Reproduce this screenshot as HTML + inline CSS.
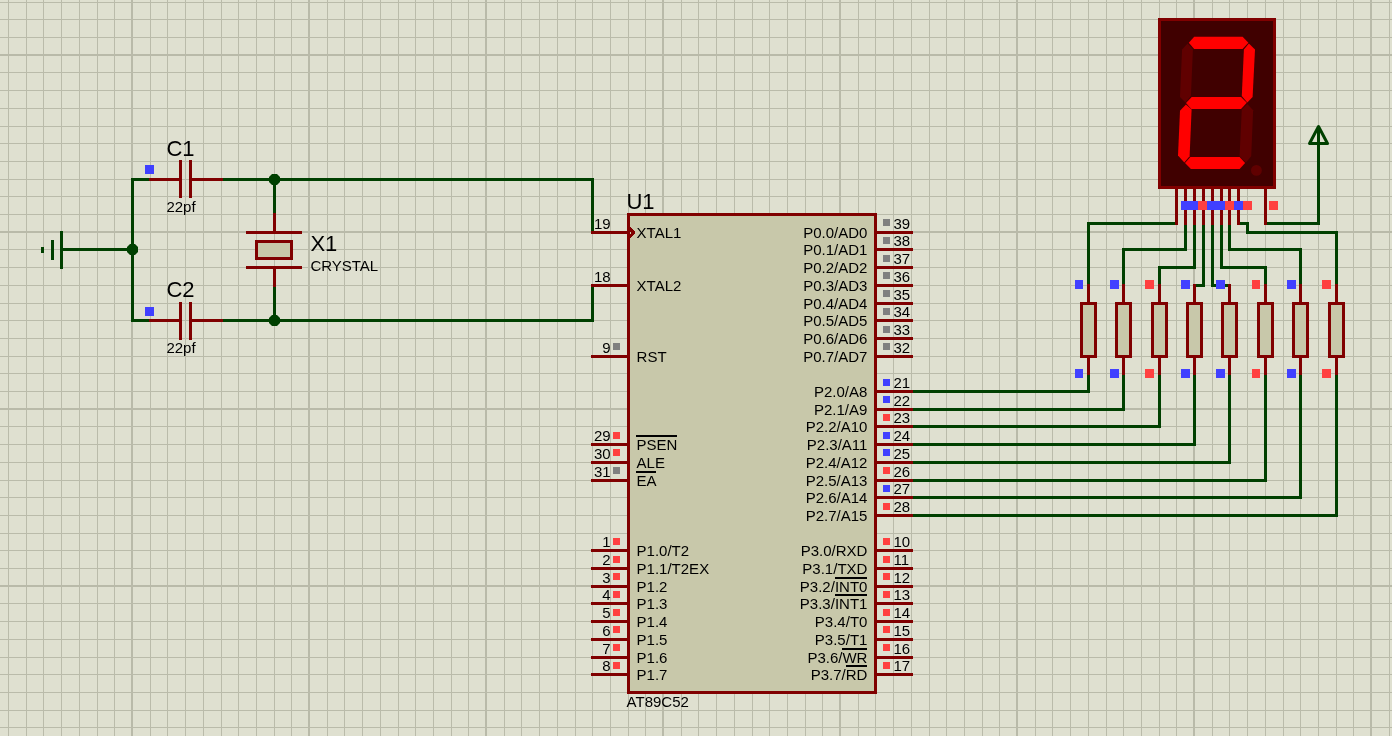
<!DOCTYPE html>
<html lang="en"><head><meta charset="utf-8"><title>AT89C52 seven segment schematic</title>
<style>html,body{margin:0;padding:0;background:#dfe0d0;overflow:hidden}svg{display:block}svg{will-change:transform}text{white-space:pre}</style></head>
<body>
<svg width="1392" height="736" viewBox="0 0 1392 736" font-family="'Liberation Sans', sans-serif" fill="#000000">
<rect x="0" y="0" width="1392" height="736" fill="#dfe0d0"/>
<g fill="#babbaa" shape-rendering="crispEdges"><rect x="8" y="0" width="1" height="736"/><rect x="26" y="0" width="1" height="736"/><rect x="43" y="0" width="1" height="736"/><rect x="61" y="0" width="1" height="736"/><rect x="79" y="0" width="1" height="736"/><rect x="97" y="0" width="1" height="736"/><rect x="114" y="0" width="1" height="736"/><rect x="131" y="0" width="2" height="736" fill="#b9baa9"/><rect x="150" y="0" width="1" height="736"/><rect x="167" y="0" width="1" height="736"/><rect x="185" y="0" width="1" height="736"/><rect x="203" y="0" width="1" height="736"/><rect x="221" y="0" width="1" height="736"/><rect x="238" y="0" width="1" height="736"/><rect x="256" y="0" width="1" height="736"/><rect x="274" y="0" width="1" height="736"/><rect x="291" y="0" width="1" height="736"/><rect x="308" y="0" width="2" height="736" fill="#b9baa9"/><rect x="327" y="0" width="1" height="736"/><rect x="344" y="0" width="1" height="736"/><rect x="362" y="0" width="1" height="736"/><rect x="380" y="0" width="1" height="736"/><rect x="398" y="0" width="1" height="736"/><rect x="415" y="0" width="1" height="736"/><rect x="433" y="0" width="1" height="736"/><rect x="451" y="0" width="1" height="736"/><rect x="468" y="0" width="1" height="736"/><rect x="485" y="0" width="2" height="736" fill="#b9baa9"/><rect x="504" y="0" width="1" height="736"/><rect x="521" y="0" width="1" height="736"/><rect x="539" y="0" width="1" height="736"/><rect x="557" y="0" width="1" height="736"/><rect x="575" y="0" width="1" height="736"/><rect x="592" y="0" width="1" height="736"/><rect x="610" y="0" width="1" height="736"/><rect x="628" y="0" width="1" height="736"/><rect x="645" y="0" width="1" height="736"/><rect x="662" y="0" width="2" height="736" fill="#b9baa9"/><rect x="681" y="0" width="1" height="736"/><rect x="698" y="0" width="1" height="736"/><rect x="716" y="0" width="1" height="736"/><rect x="734" y="0" width="1" height="736"/><rect x="752" y="0" width="1" height="736"/><rect x="769" y="0" width="1" height="736"/><rect x="787" y="0" width="1" height="736"/><rect x="805" y="0" width="1" height="736"/><rect x="822" y="0" width="1" height="736"/><rect x="839" y="0" width="2" height="736" fill="#b9baa9"/><rect x="858" y="0" width="1" height="736"/><rect x="875" y="0" width="1" height="736"/><rect x="893" y="0" width="1" height="736"/><rect x="911" y="0" width="1" height="736"/><rect x="929" y="0" width="1" height="736"/><rect x="946" y="0" width="1" height="736"/><rect x="964" y="0" width="1" height="736"/><rect x="982" y="0" width="1" height="736"/><rect x="999" y="0" width="1" height="736"/><rect x="1016" y="0" width="2" height="736" fill="#b9baa9"/><rect x="1035" y="0" width="1" height="736"/><rect x="1052" y="0" width="1" height="736"/><rect x="1070" y="0" width="1" height="736"/><rect x="1088" y="0" width="1" height="736"/><rect x="1106" y="0" width="1" height="736"/><rect x="1123" y="0" width="1" height="736"/><rect x="1141" y="0" width="1" height="736"/><rect x="1159" y="0" width="1" height="736"/><rect x="1176" y="0" width="1" height="736"/><rect x="1193" y="0" width="2" height="736" fill="#b9baa9"/><rect x="1212" y="0" width="1" height="736"/><rect x="1229" y="0" width="1" height="736"/><rect x="1247" y="0" width="1" height="736"/><rect x="1265" y="0" width="1" height="736"/><rect x="1283" y="0" width="1" height="736"/><rect x="1300" y="0" width="1" height="736"/><rect x="1318" y="0" width="1" height="736"/><rect x="1336" y="0" width="1" height="736"/><rect x="1353" y="0" width="1" height="736"/><rect x="1370" y="0" width="2" height="736" fill="#b9baa9"/><rect x="1389" y="0" width="1" height="736"/><rect x="0" y="2" width="1392" height="1"/><rect x="0" y="19" width="1392" height="1"/><rect x="0" y="37" width="1392" height="1"/><rect x="0" y="54" width="1392" height="2" fill="#b9baa9"/><rect x="0" y="72" width="1392" height="1"/><rect x="0" y="90" width="1392" height="1"/><rect x="0" y="108" width="1392" height="1"/><rect x="0" y="126" width="1392" height="1"/><rect x="0" y="143" width="1392" height="1"/><rect x="0" y="161" width="1392" height="1"/><rect x="0" y="179" width="1392" height="1"/><rect x="0" y="196" width="1392" height="1"/><rect x="0" y="214" width="1392" height="1"/><rect x="0" y="231" width="1392" height="2" fill="#b9baa9"/><rect x="0" y="249" width="1392" height="1"/><rect x="0" y="267" width="1392" height="1"/><rect x="0" y="285" width="1392" height="1"/><rect x="0" y="303" width="1392" height="1"/><rect x="0" y="320" width="1392" height="1"/><rect x="0" y="338" width="1392" height="1"/><rect x="0" y="356" width="1392" height="1"/><rect x="0" y="373" width="1392" height="1"/><rect x="0" y="391" width="1392" height="1"/><rect x="0" y="408" width="1392" height="2" fill="#b9baa9"/><rect x="0" y="426" width="1392" height="1"/><rect x="0" y="444" width="1392" height="1"/><rect x="0" y="462" width="1392" height="1"/><rect x="0" y="480" width="1392" height="1"/><rect x="0" y="497" width="1392" height="1"/><rect x="0" y="515" width="1392" height="1"/><rect x="0" y="533" width="1392" height="1"/><rect x="0" y="550" width="1392" height="1"/><rect x="0" y="568" width="1392" height="1"/><rect x="0" y="585" width="1392" height="2" fill="#b9baa9"/><rect x="0" y="603" width="1392" height="1"/><rect x="0" y="621" width="1392" height="1"/><rect x="0" y="639" width="1392" height="1"/><rect x="0" y="657" width="1392" height="1"/><rect x="0" y="674" width="1392" height="1"/><rect x="0" y="692" width="1392" height="1"/><rect x="0" y="710" width="1392" height="1"/><rect x="0" y="727" width="1392" height="1"/></g>
<g shape-rendering="crispEdges">
<polyline points="61.5,232.5 61.5,267.5" fill="none" stroke="#004000" stroke-width="3" stroke-linecap="square" stroke-linejoin="miter"/><polyline points="52.5,241.5 52.5,258.5" fill="none" stroke="#004000" stroke-width="3" stroke-linecap="square" stroke-linejoin="miter"/><polyline points="42.5,248 42.5,251" fill="none" stroke="#004000" stroke-width="3" stroke-linecap="square" stroke-linejoin="miter"/><polyline points="61.5,249.5 132.5,249.5" fill="none" stroke="#004000" stroke-width="3" stroke-linecap="butt" stroke-linejoin="miter"/><polyline points="150.5,179.5 132.5,179.5 132.5,320.5 150.5,320.5" fill="none" stroke="#004000" stroke-width="3" stroke-linecap="butt" stroke-linejoin="miter"/><polyline points="221.5,179.5 592.5,179.5 592.5,232.5" fill="none" stroke="#004000" stroke-width="3" stroke-linecap="butt" stroke-linejoin="miter"/><polyline points="221.5,320.5 592.5,320.5 592.5,285.5" fill="none" stroke="#004000" stroke-width="3" stroke-linecap="butt" stroke-linejoin="miter"/><polyline points="274.5,179.5 274.5,214.5" fill="none" stroke="#004000" stroke-width="3" stroke-linecap="butt" stroke-linejoin="miter"/><polyline points="274.5,285.5 274.5,320.5" fill="none" stroke="#004000" stroke-width="3" stroke-linecap="butt" stroke-linejoin="miter"/><polyline points="1265.5,223.5 1318.5,223.5 1318.5,125.5" fill="none" stroke="#004000" stroke-width="3" stroke-linecap="butt" stroke-linejoin="miter"/><polyline points="1088.5,373.5 1088.5,391.5 911.5,391.5" fill="none" stroke="#004000" stroke-width="3" stroke-linecap="butt" stroke-linejoin="miter"/><polyline points="1123.5,373.5 1123.5,409.5 911.5,409.5" fill="none" stroke="#004000" stroke-width="3" stroke-linecap="butt" stroke-linejoin="miter"/><polyline points="1159.5,373.5 1159.5,426.5 911.5,426.5" fill="none" stroke="#004000" stroke-width="3" stroke-linecap="butt" stroke-linejoin="miter"/><polyline points="1194.5,373.5 1194.5,444.5 911.5,444.5" fill="none" stroke="#004000" stroke-width="3" stroke-linecap="butt" stroke-linejoin="miter"/><polyline points="1229.5,373.5 1229.5,462.5 911.5,462.5" fill="none" stroke="#004000" stroke-width="3" stroke-linecap="butt" stroke-linejoin="miter"/><polyline points="1265.5,373.5 1265.5,480.5 911.5,480.5" fill="none" stroke="#004000" stroke-width="3" stroke-linecap="butt" stroke-linejoin="miter"/><polyline points="1300.5,373.5 1300.5,497.5 911.5,497.5" fill="none" stroke="#004000" stroke-width="3" stroke-linecap="butt" stroke-linejoin="miter"/><polyline points="1336.5,373.5 1336.5,515.5 911.5,515.5" fill="none" stroke="#004000" stroke-width="3" stroke-linecap="butt" stroke-linejoin="miter"/><polyline points="1176.5,223.5 1088.5,223.5 1088.5,285.5" fill="none" stroke="#004000" stroke-width="3" stroke-linecap="butt" stroke-linejoin="miter"/><polyline points="1185.5,223.5 1185.5,249.5 1123.5,249.5 1123.5,285.5" fill="none" stroke="#004000" stroke-width="3" stroke-linecap="butt" stroke-linejoin="miter"/><polyline points="1194.5,223.5 1194.5,267.5 1159.5,267.5 1159.5,285.5" fill="none" stroke="#004000" stroke-width="3" stroke-linecap="butt" stroke-linejoin="miter"/><polyline points="1203.5,223.5 1203.5,285.5 1194.5,285.5" fill="none" stroke="#004000" stroke-width="3" stroke-linecap="butt" stroke-linejoin="miter"/><polyline points="1212.5,223.5 1212.5,285.5 1229.5,285.5" fill="none" stroke="#004000" stroke-width="3" stroke-linecap="butt" stroke-linejoin="miter"/><polyline points="1221.5,223.5 1221.5,267.5 1265.5,267.5 1265.5,285.5" fill="none" stroke="#004000" stroke-width="3" stroke-linecap="butt" stroke-linejoin="miter"/><polyline points="1229.5,223.5 1229.5,249.5 1300.5,249.5 1300.5,285.5" fill="none" stroke="#004000" stroke-width="3" stroke-linecap="butt" stroke-linejoin="miter"/><polyline points="1238.5,223.5 1247.5,223.5 1247.5,232.5 1336.5,232.5 1336.5,285.5" fill="none" stroke="#004000" stroke-width="3" stroke-linecap="butt" stroke-linejoin="miter"/>
<polyline points="150.5,179.5 180.5,179.5" fill="none" stroke="#800000" stroke-width="3" stroke-linecap="square" stroke-linejoin="miter"/><polyline points="190.5,179.5 221.5,179.5" fill="none" stroke="#800000" stroke-width="3" stroke-linecap="square" stroke-linejoin="miter"/><polyline points="180.5,159.5 180.5,197.5" fill="none" stroke="#800000" stroke-width="3" stroke-linecap="butt" stroke-linejoin="miter"/><polyline points="190.5,159.5 190.5,197.5" fill="none" stroke="#800000" stroke-width="3" stroke-linecap="butt" stroke-linejoin="miter"/><polyline points="150.5,320.5 180.5,320.5" fill="none" stroke="#800000" stroke-width="3" stroke-linecap="square" stroke-linejoin="miter"/><polyline points="190.5,320.5 221.5,320.5" fill="none" stroke="#800000" stroke-width="3" stroke-linecap="square" stroke-linejoin="miter"/><polyline points="180.5,301.5 180.5,339.5" fill="none" stroke="#800000" stroke-width="3" stroke-linecap="butt" stroke-linejoin="miter"/><polyline points="190.5,301.5 190.5,339.5" fill="none" stroke="#800000" stroke-width="3" stroke-linecap="butt" stroke-linejoin="miter"/><polyline points="274.5,214.5 274.5,232.5" fill="none" stroke="#800000" stroke-width="3" stroke-linecap="square" stroke-linejoin="miter"/><polyline points="274.5,267.5 274.5,285.5" fill="none" stroke="#800000" stroke-width="3" stroke-linecap="square" stroke-linejoin="miter"/><polyline points="247.5,232.5 300.5,232.5" fill="none" stroke="#800000" stroke-width="3" stroke-linecap="square" stroke-linejoin="miter"/><polyline points="247.5,267.5 300.5,267.5" fill="none" stroke="#800000" stroke-width="3" stroke-linecap="square" stroke-linejoin="miter"/><polyline points="592.5,232.5 628.5,232.5" fill="none" stroke="#800000" stroke-width="3" stroke-linecap="square" stroke-linejoin="miter"/><polyline points="592.5,285.5 628.5,285.5" fill="none" stroke="#800000" stroke-width="3" stroke-linecap="square" stroke-linejoin="miter"/><polyline points="592.5,356.5 628.5,356.5" fill="none" stroke="#800000" stroke-width="3" stroke-linecap="square" stroke-linejoin="miter"/><polyline points="592.5,444.5 628.5,444.5" fill="none" stroke="#800000" stroke-width="3" stroke-linecap="square" stroke-linejoin="miter"/><polyline points="592.5,462.5 628.5,462.5" fill="none" stroke="#800000" stroke-width="3" stroke-linecap="square" stroke-linejoin="miter"/><polyline points="592.5,480.5 628.5,480.5" fill="none" stroke="#800000" stroke-width="3" stroke-linecap="square" stroke-linejoin="miter"/><polyline points="592.5,550.5 628.5,550.5" fill="none" stroke="#800000" stroke-width="3" stroke-linecap="square" stroke-linejoin="miter"/><polyline points="592.5,568.5 628.5,568.5" fill="none" stroke="#800000" stroke-width="3" stroke-linecap="square" stroke-linejoin="miter"/><polyline points="592.5,586.5 628.5,586.5" fill="none" stroke="#800000" stroke-width="3" stroke-linecap="square" stroke-linejoin="miter"/><polyline points="592.5,603.5 628.5,603.5" fill="none" stroke="#800000" stroke-width="3" stroke-linecap="square" stroke-linejoin="miter"/><polyline points="592.5,621.5 628.5,621.5" fill="none" stroke="#800000" stroke-width="3" stroke-linecap="square" stroke-linejoin="miter"/><polyline points="592.5,639.5 628.5,639.5" fill="none" stroke="#800000" stroke-width="3" stroke-linecap="square" stroke-linejoin="miter"/><polyline points="592.5,657.5 628.5,657.5" fill="none" stroke="#800000" stroke-width="3" stroke-linecap="square" stroke-linejoin="miter"/><polyline points="592.5,674.5 628.5,674.5" fill="none" stroke="#800000" stroke-width="3" stroke-linecap="square" stroke-linejoin="miter"/><polyline points="875.5,232.5 911.5,232.5" fill="none" stroke="#800000" stroke-width="3" stroke-linecap="square" stroke-linejoin="miter"/><polyline points="875.5,249.5 911.5,249.5" fill="none" stroke="#800000" stroke-width="3" stroke-linecap="square" stroke-linejoin="miter"/><polyline points="875.5,267.5 911.5,267.5" fill="none" stroke="#800000" stroke-width="3" stroke-linecap="square" stroke-linejoin="miter"/><polyline points="875.5,285.5 911.5,285.5" fill="none" stroke="#800000" stroke-width="3" stroke-linecap="square" stroke-linejoin="miter"/><polyline points="875.5,303.5 911.5,303.5" fill="none" stroke="#800000" stroke-width="3" stroke-linecap="square" stroke-linejoin="miter"/><polyline points="875.5,320.5 911.5,320.5" fill="none" stroke="#800000" stroke-width="3" stroke-linecap="square" stroke-linejoin="miter"/><polyline points="875.5,338.5 911.5,338.5" fill="none" stroke="#800000" stroke-width="3" stroke-linecap="square" stroke-linejoin="miter"/><polyline points="875.5,356.5 911.5,356.5" fill="none" stroke="#800000" stroke-width="3" stroke-linecap="square" stroke-linejoin="miter"/><polyline points="875.5,391.5 911.5,391.5" fill="none" stroke="#800000" stroke-width="3" stroke-linecap="square" stroke-linejoin="miter"/><polyline points="875.5,409.5 911.5,409.5" fill="none" stroke="#800000" stroke-width="3" stroke-linecap="square" stroke-linejoin="miter"/><polyline points="875.5,426.5 911.5,426.5" fill="none" stroke="#800000" stroke-width="3" stroke-linecap="square" stroke-linejoin="miter"/><polyline points="875.5,444.5 911.5,444.5" fill="none" stroke="#800000" stroke-width="3" stroke-linecap="square" stroke-linejoin="miter"/><polyline points="875.5,462.5 911.5,462.5" fill="none" stroke="#800000" stroke-width="3" stroke-linecap="square" stroke-linejoin="miter"/><polyline points="875.5,480.5 911.5,480.5" fill="none" stroke="#800000" stroke-width="3" stroke-linecap="square" stroke-linejoin="miter"/><polyline points="875.5,497.5 911.5,497.5" fill="none" stroke="#800000" stroke-width="3" stroke-linecap="square" stroke-linejoin="miter"/><polyline points="875.5,515.5 911.5,515.5" fill="none" stroke="#800000" stroke-width="3" stroke-linecap="square" stroke-linejoin="miter"/><polyline points="875.5,550.5 911.5,550.5" fill="none" stroke="#800000" stroke-width="3" stroke-linecap="square" stroke-linejoin="miter"/><polyline points="875.5,568.5 911.5,568.5" fill="none" stroke="#800000" stroke-width="3" stroke-linecap="square" stroke-linejoin="miter"/><polyline points="875.5,586.5 911.5,586.5" fill="none" stroke="#800000" stroke-width="3" stroke-linecap="square" stroke-linejoin="miter"/><polyline points="875.5,603.5 911.5,603.5" fill="none" stroke="#800000" stroke-width="3" stroke-linecap="square" stroke-linejoin="miter"/><polyline points="875.5,621.5 911.5,621.5" fill="none" stroke="#800000" stroke-width="3" stroke-linecap="square" stroke-linejoin="miter"/><polyline points="875.5,639.5 911.5,639.5" fill="none" stroke="#800000" stroke-width="3" stroke-linecap="square" stroke-linejoin="miter"/><polyline points="875.5,657.5 911.5,657.5" fill="none" stroke="#800000" stroke-width="3" stroke-linecap="square" stroke-linejoin="miter"/><polyline points="875.5,674.5 911.5,674.5" fill="none" stroke="#800000" stroke-width="3" stroke-linecap="square" stroke-linejoin="miter"/><polyline points="1176.5,187.5 1176.5,225" fill="none" stroke="#800000" stroke-width="3" stroke-linecap="butt" stroke-linejoin="miter"/><polyline points="1185.5,187.5 1185.5,225" fill="none" stroke="#800000" stroke-width="3" stroke-linecap="butt" stroke-linejoin="miter"/><polyline points="1194.5,187.5 1194.5,225" fill="none" stroke="#800000" stroke-width="3" stroke-linecap="butt" stroke-linejoin="miter"/><polyline points="1203.5,187.5 1203.5,225" fill="none" stroke="#800000" stroke-width="3" stroke-linecap="butt" stroke-linejoin="miter"/><polyline points="1212.5,187.5 1212.5,225" fill="none" stroke="#800000" stroke-width="3" stroke-linecap="butt" stroke-linejoin="miter"/><polyline points="1221.5,187.5 1221.5,225" fill="none" stroke="#800000" stroke-width="3" stroke-linecap="butt" stroke-linejoin="miter"/><polyline points="1229.5,187.5 1229.5,225" fill="none" stroke="#800000" stroke-width="3" stroke-linecap="butt" stroke-linejoin="miter"/><polyline points="1238.5,187.5 1238.5,225" fill="none" stroke="#800000" stroke-width="3" stroke-linecap="butt" stroke-linejoin="miter"/><polyline points="1265.5,187.5 1265.5,225" fill="none" stroke="#800000" stroke-width="3" stroke-linecap="butt" stroke-linejoin="miter"/><polyline points="1088.5,284 1088.5,303.5" fill="none" stroke="#800000" stroke-width="3" stroke-linecap="butt" stroke-linejoin="miter"/><polyline points="1088.5,356.5 1088.5,375" fill="none" stroke="#800000" stroke-width="3" stroke-linecap="butt" stroke-linejoin="miter"/><polyline points="1123.5,284 1123.5,303.5" fill="none" stroke="#800000" stroke-width="3" stroke-linecap="butt" stroke-linejoin="miter"/><polyline points="1123.5,356.5 1123.5,375" fill="none" stroke="#800000" stroke-width="3" stroke-linecap="butt" stroke-linejoin="miter"/><polyline points="1159.5,284 1159.5,303.5" fill="none" stroke="#800000" stroke-width="3" stroke-linecap="butt" stroke-linejoin="miter"/><polyline points="1159.5,356.5 1159.5,375" fill="none" stroke="#800000" stroke-width="3" stroke-linecap="butt" stroke-linejoin="miter"/><polyline points="1194.5,284 1194.5,303.5" fill="none" stroke="#800000" stroke-width="3" stroke-linecap="butt" stroke-linejoin="miter"/><polyline points="1194.5,356.5 1194.5,375" fill="none" stroke="#800000" stroke-width="3" stroke-linecap="butt" stroke-linejoin="miter"/><polyline points="1229.5,284 1229.5,303.5" fill="none" stroke="#800000" stroke-width="3" stroke-linecap="butt" stroke-linejoin="miter"/><polyline points="1229.5,356.5 1229.5,375" fill="none" stroke="#800000" stroke-width="3" stroke-linecap="butt" stroke-linejoin="miter"/><polyline points="1265.5,284 1265.5,303.5" fill="none" stroke="#800000" stroke-width="3" stroke-linecap="butt" stroke-linejoin="miter"/><polyline points="1265.5,356.5 1265.5,375" fill="none" stroke="#800000" stroke-width="3" stroke-linecap="butt" stroke-linejoin="miter"/><polyline points="1300.5,284 1300.5,303.5" fill="none" stroke="#800000" stroke-width="3" stroke-linecap="butt" stroke-linejoin="miter"/><polyline points="1300.5,356.5 1300.5,375" fill="none" stroke="#800000" stroke-width="3" stroke-linecap="butt" stroke-linejoin="miter"/><polyline points="1336.5,284 1336.5,303.5" fill="none" stroke="#800000" stroke-width="3" stroke-linecap="butt" stroke-linejoin="miter"/><polyline points="1336.5,356.5 1336.5,375" fill="none" stroke="#800000" stroke-width="3" stroke-linecap="butt" stroke-linejoin="miter"/>
<rect x="256.5" y="241.5" width="35" height="17" fill="#c8c8aa" stroke="#800000" stroke-width="3"/><rect x="628.5" y="214.5" width="247" height="478" fill="#c8c8aa" stroke="#800000" stroke-width="3"/><polygon points="629.5,226 635.5,232.5 629.5,239" fill="#800000"/><rect x="630" y="231.5" width="1" height="2" fill="#c8c8aa"/><rect x="1159.5" y="19.5" width="115" height="168" fill="#400000" stroke="#800000" stroke-width="3"/><rect x="1081.5" y="303.5" width="14" height="53" fill="#c8c8aa" stroke="#800000" stroke-width="3"/><rect x="1116.5" y="303.5" width="14" height="53" fill="#c8c8aa" stroke="#800000" stroke-width="3"/><rect x="1152.5" y="303.5" width="14" height="53" fill="#c8c8aa" stroke="#800000" stroke-width="3"/><rect x="1187.5" y="303.5" width="14" height="53" fill="#c8c8aa" stroke="#800000" stroke-width="3"/><rect x="1222.5" y="303.5" width="14" height="53" fill="#c8c8aa" stroke="#800000" stroke-width="3"/><rect x="1258.5" y="303.5" width="14" height="53" fill="#c8c8aa" stroke="#800000" stroke-width="3"/><rect x="1293.5" y="303.5" width="14" height="53" fill="#c8c8aa" stroke="#800000" stroke-width="3"/><rect x="1329.5" y="303.5" width="14" height="53" fill="#c8c8aa" stroke="#800000" stroke-width="3"/>
<rect x="145" y="165" width="9" height="9" fill="#4040ff"/><rect x="145" y="307" width="9" height="9" fill="#4040ff"/><rect x="613" y="343" width="7" height="7" fill="#808080"/><rect x="613" y="432" width="7" height="7" fill="#ff4040"/><rect x="613" y="449" width="7" height="7" fill="#ff4040"/><rect x="613" y="467" width="7" height="7" fill="#808080"/><rect x="613" y="538" width="7" height="7" fill="#ff4040"/><rect x="613" y="556" width="7" height="7" fill="#ff4040"/><rect x="613" y="573" width="7" height="7" fill="#ff4040"/><rect x="613" y="591" width="7" height="7" fill="#ff4040"/><rect x="613" y="609" width="7" height="7" fill="#ff4040"/><rect x="613" y="626" width="7" height="7" fill="#ff4040"/><rect x="613" y="644" width="7" height="7" fill="#ff4040"/><rect x="613" y="662" width="7" height="7" fill="#ff4040"/><rect x="883" y="219" width="7" height="7" fill="#808080"/><rect x="883" y="237" width="7" height="7" fill="#808080"/><rect x="883" y="255" width="7" height="7" fill="#808080"/><rect x="883" y="272" width="7" height="7" fill="#808080"/><rect x="883" y="290" width="7" height="7" fill="#808080"/><rect x="883" y="308" width="7" height="7" fill="#808080"/><rect x="883" y="326" width="7" height="7" fill="#808080"/><rect x="883" y="343" width="7" height="7" fill="#808080"/><rect x="883" y="379" width="7" height="7" fill="#4040ff"/><rect x="883" y="396" width="7" height="7" fill="#4040ff"/><rect x="883" y="414" width="7" height="7" fill="#ff4040"/><rect x="883" y="432" width="7" height="7" fill="#4040ff"/><rect x="883" y="449" width="7" height="7" fill="#4040ff"/><rect x="883" y="467" width="7" height="7" fill="#ff4040"/><rect x="883" y="485" width="7" height="7" fill="#4040ff"/><rect x="883" y="503" width="7" height="7" fill="#ff4040"/><rect x="883" y="538" width="7" height="7" fill="#ff4040"/><rect x="883" y="556" width="7" height="7" fill="#ff4040"/><rect x="883" y="573" width="7" height="7" fill="#ff4040"/><rect x="883" y="591" width="7" height="7" fill="#ff4040"/><rect x="883" y="609" width="7" height="7" fill="#ff4040"/><rect x="883" y="626" width="7" height="7" fill="#ff4040"/><rect x="883" y="644" width="7" height="7" fill="#ff4040"/><rect x="883" y="662" width="7" height="7" fill="#ff4040"/><rect x="1181" y="201" width="9" height="9" fill="#4040ff"/><rect x="1190" y="201" width="9" height="9" fill="#4040ff"/><rect x="1198" y="201" width="9" height="9" fill="#ff4040"/><rect x="1207" y="201" width="9" height="9" fill="#4040ff"/><rect x="1216" y="201" width="9" height="9" fill="#4040ff"/><rect x="1225" y="201" width="9" height="9" fill="#ff4040"/><rect x="1234" y="201" width="9" height="9" fill="#4040ff"/><rect x="1243" y="201" width="9" height="9" fill="#ff4040"/><rect x="1269" y="201" width="9" height="9" fill="#ff4040"/><rect x="1075" y="280" width="8" height="9" fill="#4040ff"/><rect x="1075" y="369" width="8" height="9" fill="#4040ff"/><rect x="1110" y="280" width="9" height="9" fill="#4040ff"/><rect x="1110" y="369" width="9" height="9" fill="#4040ff"/><rect x="1145" y="280" width="9" height="9" fill="#ff4040"/><rect x="1145" y="369" width="9" height="9" fill="#ff4040"/><rect x="1181" y="280" width="9" height="9" fill="#4040ff"/><rect x="1181" y="369" width="9" height="9" fill="#4040ff"/><rect x="1216" y="280" width="9" height="9" fill="#4040ff"/><rect x="1216" y="369" width="9" height="9" fill="#4040ff"/><rect x="1252" y="280" width="8" height="9" fill="#ff4040"/><rect x="1252" y="369" width="8" height="9" fill="#ff4040"/><rect x="1287" y="280" width="9" height="9" fill="#4040ff"/><rect x="1287" y="369" width="9" height="9" fill="#4040ff"/><rect x="1322" y="280" width="9" height="9" fill="#ff4040"/><rect x="1322" y="369" width="9" height="9" fill="#ff4040"/>
<rect x="636" y="435" width="41" height="2" fill="#000000"/><rect x="636" y="471" width="20" height="2" fill="#000000"/><rect x="835" y="577" width="32" height="2" fill="#000000"/><rect x="835" y="594" width="32" height="2" fill="#000000"/><rect x="842" y="648" width="25" height="2" fill="#000000"/><rect x="846" y="665" width="21" height="2" fill="#000000"/>
</g>
<polygon points="1194.2,36.8 1242.6,36.8 1248.4,42.8 1242.6,49 1194.2,49 1188.8,42.8" fill="#ff0000"/><polygon points="1248.9,43.4 1255,49.4 1252.6,96.9 1247.3,102.4 1241.8,96.1 1243.9,49.4" fill="#ff0000"/><polygon points="1187.6,43.4 1192.9,49 1190.9,96.1 1185.5,102.4 1180,96.9 1182.1,49.4" fill="#600000"/><polygon points="1191.7,96.9 1241,96.9 1246.8,102.7 1241,109 1191.3,109 1186,103" fill="#ff0000"/><polygon points="1185.9,104.6 1191.6,109.6 1189.6,156.3 1184.3,162.4 1178,155.5 1180,110.7" fill="#ff0000"/><polygon points="1247.3,104.1 1253.1,110.2 1251.2,156.3 1245.9,162.4 1239.6,156.3 1241.8,109.6" fill="#600000"/><polygon points="1190.4,157.1 1239.6,157.1 1245.1,162.9 1239.6,169 1190.9,169 1185,162.9" fill="#ff0000"/><circle cx="1256.4" cy="170.4" r="5.4" fill="#600000"/>
<polygon points="1318.5,126.5 1309.5,143.5 1327.5,143.5" fill="none" stroke="#004000" stroke-width="3" stroke-linejoin="round"/>
<polygon points="130,244 135,244 138,247 138,252 135,255 130,255 127,252 127,247" fill="#004000"/>
<polygon points="272,174 277,174 280,177 280,182 277,185 272,185 269,182 269,177" fill="#004000"/>
<polygon points="272,315 277,315 280,318 280,323 277,326 272,326 269,323 269,318" fill="#004000"/>
<text x="166.4" y="156" font-size="22" text-anchor="start">C1</text><text x="166.4" y="212" font-size="15.0" text-anchor="start">22pf</text><text x="166.4" y="297" font-size="22" text-anchor="start">C2</text><text x="166.4" y="353" font-size="15.0" text-anchor="start">22pf</text><text x="310.4" y="251" font-size="22" text-anchor="start">X1</text><text x="310.4" y="271" font-size="15.0" text-anchor="start">CRYSTAL</text><text x="626.4" y="209" font-size="22" text-anchor="start">U1</text><text x="626.6" y="707" font-size="15.0" text-anchor="start">AT89C52</text><text x="610.6" y="229" font-size="15.0" text-anchor="end">19</text><text x="636.6" y="238" font-size="15.0" text-anchor="start">XTAL1</text><text x="610.6" y="282" font-size="15.0" text-anchor="end">18</text><text x="636.6" y="291" font-size="15.0" text-anchor="start">XTAL2</text><text x="610.6" y="353" font-size="15.0" text-anchor="end">9</text><text x="636.6" y="362" font-size="15.0" text-anchor="start">RST</text><text x="610.6" y="441" font-size="15.0" text-anchor="end">29</text><text x="636.6" y="450" font-size="15.0" text-anchor="start">PSEN</text><text x="610.6" y="459" font-size="15.0" text-anchor="end">30</text><text x="636.6" y="468" font-size="15.0" text-anchor="start">ALE</text><text x="610.6" y="477" font-size="15.0" text-anchor="end">31</text><text x="636.6" y="486" font-size="15.0" text-anchor="start">EA</text><text x="610.6" y="547" font-size="15.0" text-anchor="end">1</text><text x="636.6" y="556" font-size="15.0" text-anchor="start">P1.0/T2</text><text x="610.6" y="565" font-size="15.0" text-anchor="end">2</text><text x="636.6" y="574" font-size="15.0" text-anchor="start">P1.1/T2EX</text><text x="610.6" y="583" font-size="15.0" text-anchor="end">3</text><text x="636.6" y="592" font-size="15.0" text-anchor="start">P1.2</text><text x="610.6" y="600" font-size="15.0" text-anchor="end">4</text><text x="636.6" y="609" font-size="15.0" text-anchor="start">P1.3</text><text x="610.6" y="618" font-size="15.0" text-anchor="end">5</text><text x="636.6" y="627" font-size="15.0" text-anchor="start">P1.4</text><text x="610.6" y="636" font-size="15.0" text-anchor="end">6</text><text x="636.6" y="645" font-size="15.0" text-anchor="start">P1.5</text><text x="610.6" y="654" font-size="15.0" text-anchor="end">7</text><text x="636.6" y="663" font-size="15.0" text-anchor="start">P1.6</text><text x="610.6" y="671" font-size="15.0" text-anchor="end">8</text><text x="636.6" y="680" font-size="15.0" text-anchor="start">P1.7</text><text x="893.5" y="229" font-size="15.0" text-anchor="start">39</text><text x="867.4" y="238" font-size="15.0" text-anchor="end">P0.0/AD0</text><text x="893.5" y="246" font-size="15.0" text-anchor="start">38</text><text x="867.4" y="255" font-size="15.0" text-anchor="end">P0.1/AD1</text><text x="893.5" y="264" font-size="15.0" text-anchor="start">37</text><text x="867.4" y="273" font-size="15.0" text-anchor="end">P0.2/AD2</text><text x="893.5" y="282" font-size="15.0" text-anchor="start">36</text><text x="867.4" y="291" font-size="15.0" text-anchor="end">P0.3/AD3</text><text x="893.5" y="300" font-size="15.0" text-anchor="start">35</text><text x="867.4" y="309" font-size="15.0" text-anchor="end">P0.4/AD4</text><text x="893.5" y="317" font-size="15.0" text-anchor="start">34</text><text x="867.4" y="326" font-size="15.0" text-anchor="end">P0.5/AD5</text><text x="893.5" y="335" font-size="15.0" text-anchor="start">33</text><text x="867.4" y="344" font-size="15.0" text-anchor="end">P0.6/AD6</text><text x="893.5" y="353" font-size="15.0" text-anchor="start">32</text><text x="867.4" y="362" font-size="15.0" text-anchor="end">P0.7/AD7</text><text x="893.5" y="388" font-size="15.0" text-anchor="start">21</text><text x="867.4" y="397" font-size="15.0" text-anchor="end">P2.0/A8</text><text x="893.5" y="406" font-size="15.0" text-anchor="start">22</text><text x="867.4" y="415" font-size="15.0" text-anchor="end">P2.1/A9</text><text x="893.5" y="423" font-size="15.0" text-anchor="start">23</text><text x="867.4" y="432" font-size="15.0" text-anchor="end">P2.2/A10</text><text x="893.5" y="441" font-size="15.0" text-anchor="start">24</text><text x="867.4" y="450" font-size="15.0" text-anchor="end">P2.3/A11</text><text x="893.5" y="459" font-size="15.0" text-anchor="start">25</text><text x="867.4" y="468" font-size="15.0" text-anchor="end">P2.4/A12</text><text x="893.5" y="477" font-size="15.0" text-anchor="start">26</text><text x="867.4" y="486" font-size="15.0" text-anchor="end">P2.5/A13</text><text x="893.5" y="494" font-size="15.0" text-anchor="start">27</text><text x="867.4" y="503" font-size="15.0" text-anchor="end">P2.6/A14</text><text x="893.5" y="512" font-size="15.0" text-anchor="start">28</text><text x="867.4" y="521" font-size="15.0" text-anchor="end">P2.7/A15</text><text x="893.5" y="547" font-size="15.0" text-anchor="start">10</text><text x="867.4" y="556" font-size="15.0" text-anchor="end">P3.0/RXD</text><text x="893.5" y="565" font-size="15.0" text-anchor="start">11</text><text x="867.4" y="574" font-size="15.0" text-anchor="end">P3.1/TXD</text><text x="893.5" y="583" font-size="15.0" text-anchor="start">12</text><text x="867.4" y="592" font-size="15.0" text-anchor="end">P3.2/INT0</text><text x="893.5" y="600" font-size="15.0" text-anchor="start">13</text><text x="867.4" y="609" font-size="15.0" text-anchor="end">P3.3/INT1</text><text x="893.5" y="618" font-size="15.0" text-anchor="start">14</text><text x="867.4" y="627" font-size="15.0" text-anchor="end">P3.4/T0</text><text x="893.5" y="636" font-size="15.0" text-anchor="start">15</text><text x="867.4" y="645" font-size="15.0" text-anchor="end">P3.5/T1</text><text x="893.5" y="654" font-size="15.0" text-anchor="start">16</text><text x="867.4" y="663" font-size="15.0" text-anchor="end">P3.6/WR</text><text x="893.5" y="671" font-size="15.0" text-anchor="start">17</text><text x="867.4" y="680" font-size="15.0" text-anchor="end">P3.7/RD</text>
</svg>
</body></html>
